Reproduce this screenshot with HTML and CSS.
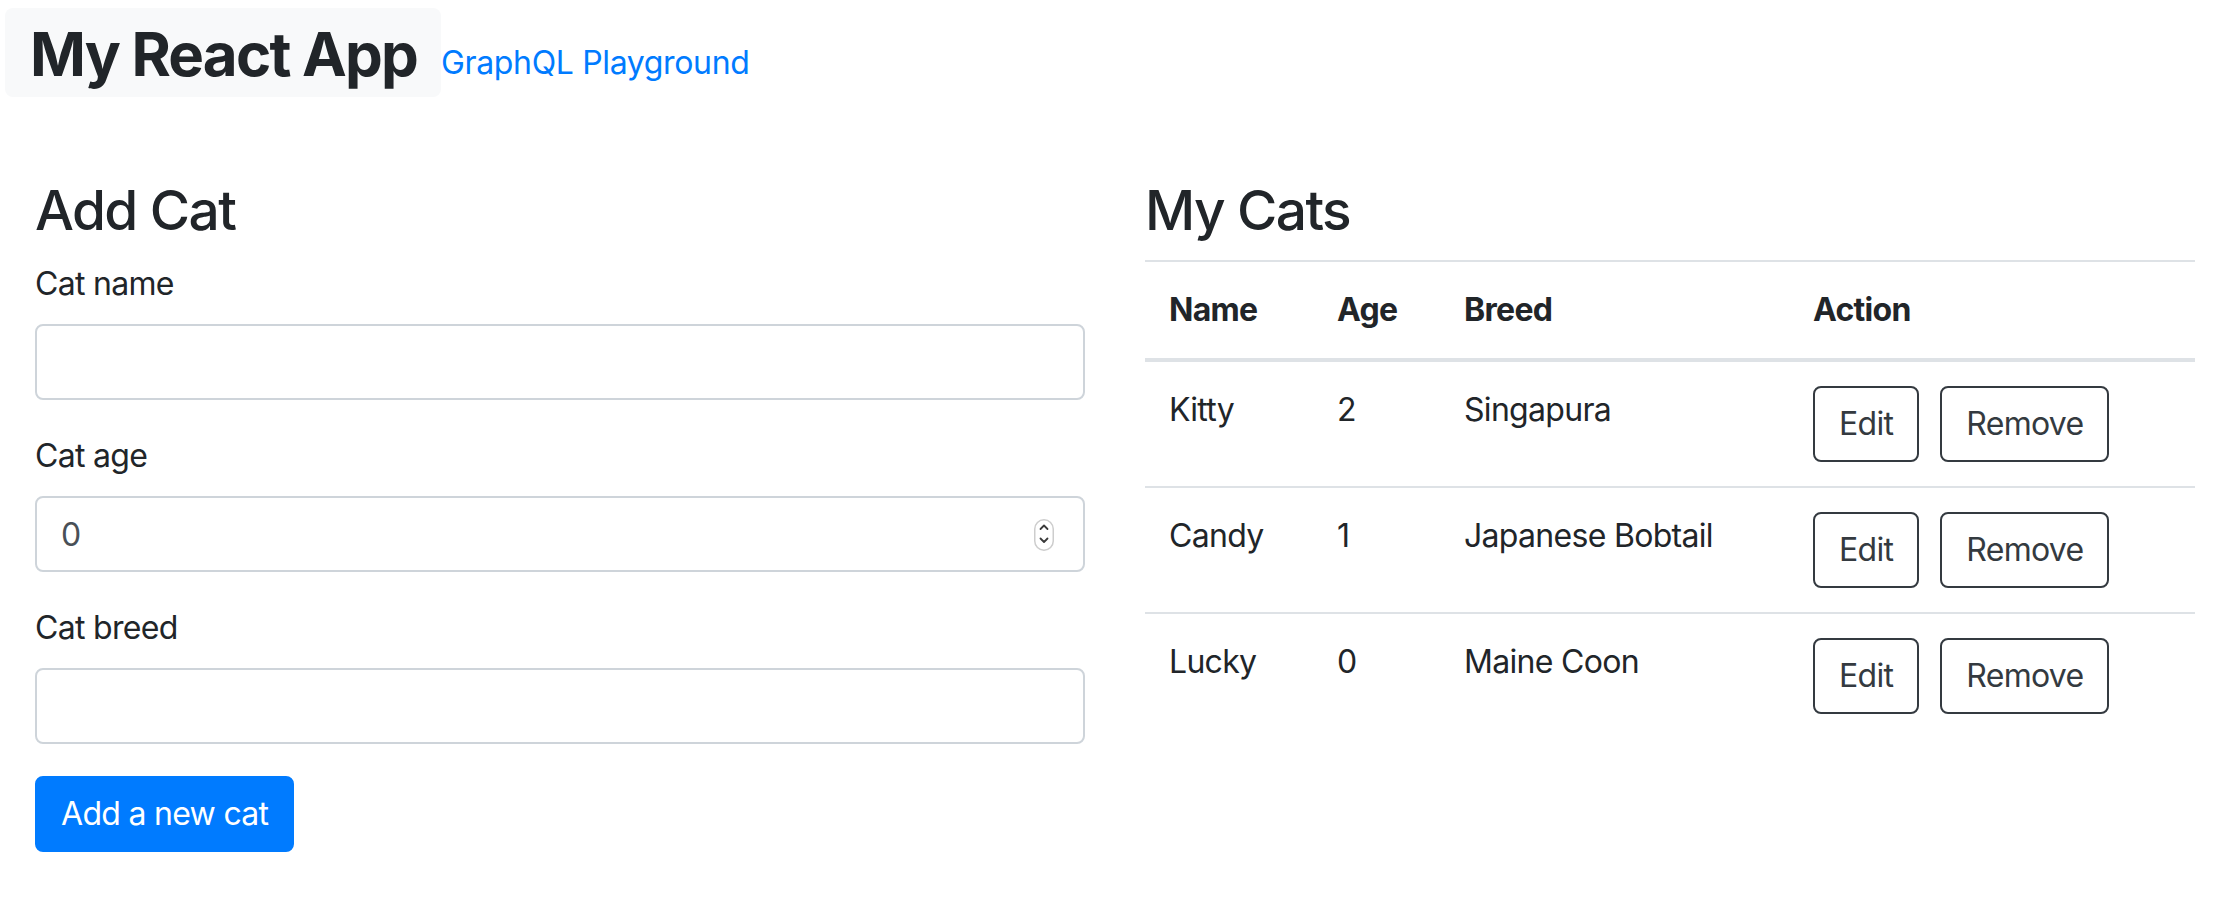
FILE: index.html
```html
<!DOCTYPE html>
<html lang="en">
<head>
<meta charset="utf-8">
<title>My React App</title>
<link rel="stylesheet" href="styles.css">
</head>
<body>
<div class="app">
  <header class="topbar">
    <div class="brand">My React App</div>
    <a class="play-link" href="#">GraphQL Playground</a>
  </header>
  <main class="columns">
    <section class="col">
      <h3 class="section-title">Add Cat</h3>
      <form class="cat-form">
        <div class="field">
          <label class="field-label" for="name">Cat name</label>
          <input class="input" id="name" type="text">
        </div>
        <div class="field">
          <label class="field-label" for="age">Cat age</label>
          <div class="num-wrap">
            <input class="input input-num" id="age" type="number" value="0">
            <span class="spinner">
              <svg width="20" height="32" viewBox="0 0 20 32">
                <rect x="0.75" y="0.75" width="18.5" height="30.5" rx="9.25" fill="#fff" stroke="#cdcdcd" stroke-width="1.5"/>
                <path d="M6.5 10 L10 6.5 L13.5 10" fill="none" stroke="#3a3a3a" stroke-width="1.8" stroke-linecap="round" stroke-linejoin="round"/>
                <path d="M6.5 19.5 L10 23 L13.5 19.5" fill="none" stroke="#3a3a3a" stroke-width="1.8" stroke-linecap="round" stroke-linejoin="round"/>
              </svg>
            </span>
          </div>
        </div>
        <div class="field">
          <label class="field-label" for="breed">Cat breed</label>
          <input class="input" id="breed" type="text">
        </div>
        <button class="btn btn-primary" type="button">Add a new cat</button>
      </form>
    </section>
    <section class="col">
      <h3 class="section-title">My Cats</h3>
      <table class="cats">
        <colgroup>
          <col class="c-name">
          <col class="c-age">
          <col class="c-breed">
          <col class="c-action">
        </colgroup>
        <thead>
          <tr><th>Name</th><th>Age</th><th>Breed</th><th>Action</th></tr>
        </thead>
        <tbody>
          <tr>
            <td>Kitty</td><td>2</td><td>Singapura</td>
            <td><div class="actions"><button class="btn btn-outline" type="button">Edit</button><button class="btn btn-outline" type="button">Remove</button></div></td>
          </tr>
          <tr>
            <td>Candy</td><td>1</td><td>Japanese Bobtail</td>
            <td><div class="actions"><button class="btn btn-outline" type="button">Edit</button><button class="btn btn-outline" type="button">Remove</button></div></td>
          </tr>
          <tr>
            <td>Lucky</td><td>0</td><td>Maine Coon</td>
            <td><div class="actions"><button class="btn btn-outline" type="button">Edit</button><button class="btn btn-outline" type="button">Remove</button></div></td>
          </tr>
        </tbody>
      </table>
    </section>
  </main>
</div>
</body>
</html>
```
FILE: styles.css
```css
* { box-sizing: border-box; }

body {
  margin: 0;
  font-family: Inter, "Liberation Sans", sans-serif;
  color: #212529;
  background: #fff;
  letter-spacing: -0.7px;
}

.app {
  padding: 8px 15px 0 5px;
}

.topbar {
  display: flex;
  align-items: flex-start;
}

.brand {
  background: #f8f9fa;
  border-radius: 8px;
  padding: 8px 24px 5px 25px;
  font-size: 60px;
  font-weight: 700;
  line-height: 76px;
  letter-spacing: -1.8px;
}

.play-link {
  margin-top: 31px;
  font-size: 32px;
  line-height: 48px;
  letter-spacing: -0.35px;
  color: #007bff;
  text-decoration: none;
}

.columns {
  display: grid;
  grid-template-columns: 1fr 1fr;
  margin-top: 80px;
}

.col {
  padding: 0 30px;
}

.section-title {
  margin: 0 0 16px;
  font-size: 55px;
  font-weight: 500;
  line-height: 67px;
  letter-spacing: -1.6px;
}

.field {
  margin-bottom: 32px;
}

.field-label {
  display: block;
  font-size: 32px;
  line-height: 48px;
  margin-bottom: 16px;
}

.input {
  display: block;
  width: 100%;
  height: 76px;
  padding: 12px 24px;
  border: 2px solid #ced4da;
  border-radius: 8px;
  font-family: inherit;
  font-size: 32px;
  line-height: 48px;
  letter-spacing: inherit;
  color: #495057;
  background: #fff;
}

.num-wrap {
  position: relative;
}

.input-num {
  -moz-appearance: textfield;
}

.input-num::-webkit-inner-spin-button,
.input-num::-webkit-outer-spin-button {
  -webkit-appearance: none;
  margin: 0;
}

.spinner {
  position: absolute;
  right: 31px;
  top: 23px;
  width: 20px;
  height: 32px;
  display: block;
}

.spinner svg {
  display: block;
}

.btn {
  display: inline-block;
  font-family: inherit;
  font-size: 32px;
  line-height: 48px;
  letter-spacing: inherit;
  padding: 12px 24px;
  border-radius: 8px;
  border: 2px solid transparent;
  cursor: pointer;
}

.btn-primary {
  background: #007bff;
  border-color: #007bff;
  color: #fff;
}

.btn-outline {
  background: transparent;
  border-color: #343a40;
  color: #343a40;
}

.cats {
  width: 100%;
  border-collapse: collapse;
  table-layout: fixed;
}

.c-name { width: 168px; }
.c-age { width: 127px; }
.c-breed { width: 349px; }

.cats th,
.cats td {
  padding: 24px;
  border-top: 2px solid #dee2e6;
  text-align: left;
  vertical-align: top;
  font-size: 32px;
  line-height: 48px;
}

.cats th {
  font-weight: 700;
}

.cats thead th {
  border-bottom: 4px solid #dee2e6;
}

.actions {
  display: flex;
  gap: 21px;
}
```
